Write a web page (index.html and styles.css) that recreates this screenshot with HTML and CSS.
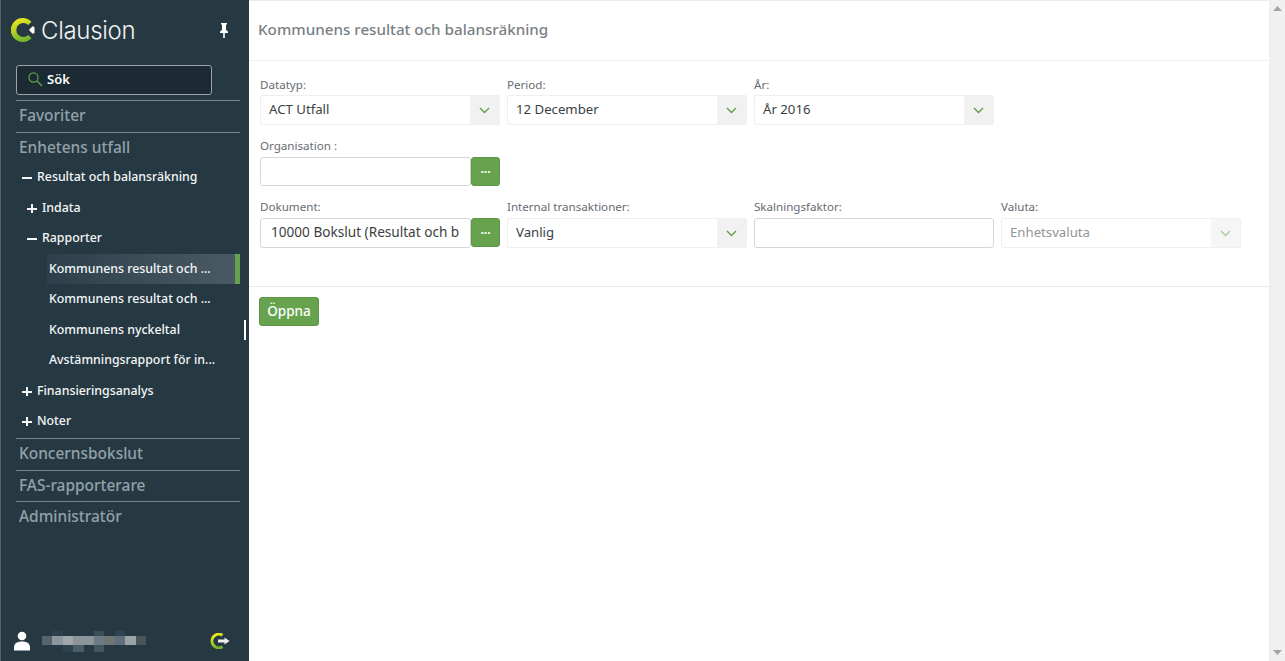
FILE: index.html
```html
<!DOCTYPE html>
<html lang="sv">
<head>
<meta charset="utf-8">
<title>Clausion</title>
<link rel="stylesheet" href="styles.css">
</head>
<body>
<div class="app">
  <aside class="sidebar">
    <div class="brand">
      <svg class="logo" width="24" height="24" viewBox="0 0 24 24" aria-hidden="true">
        <defs><linearGradient id="lg" x1="0.2" y1="0" x2="0.5" y2="1"><stop offset="0" stop-color="#f2ea1c"/><stop offset="1" stop-color="#74b52e"/></linearGradient></defs>
        <path d="M20.500 3.800A12 12 0 1 0 20.500 20.200L17.300 16.900A7 7 0 1 1 17.300 7.100Z" fill="url(#lg)"/>
        <path d="M18 12L21.500 8.200L23.500 9V15L21.500 15.800Z" fill="#fff"/>
      </svg>
      <span class="brand-name">Clausion</span>
      <svg class="pin" width="12" height="15" viewBox="0 0 12 15" aria-hidden="true"><path d="M3 0h6v1.500H8V7l2 1.500V10H2V8.500L4 7V1.500H3zM5.200 10h1.600v5H5.200z" fill="#fff"/></svg>
    </div>
    <div class="search">
      <svg width="16" height="16" viewBox="0 0 16 16" aria-hidden="true"><circle cx="6.500" cy="6.500" r="4.600" fill="none" stroke="#5fa04a" stroke-width="1.200"/><path d="M10 10l5 5" stroke="#5fa04a" stroke-width="1.400"/></svg>
      <span>Sök</span>
    </div>
    <nav class="nav">
      <div class="sec">Favoriter</div>
      <div class="sec">Enhetens utfall</div>
      <div class="item l1 first"><span class="sign minus"></span>Resultat och balansräkning</div>
      <div class="item l2"><span class="sign plus"></span>Indata</div>
      <div class="item l2"><span class="sign minus"></span>Rapporter</div>
      <div class="item leaf active">Kommunens resultat och ...</div>
      <div class="item leaf">Kommunens resultat och ...</div>
      <div class="item leaf">Kommunens nyckeltal<i class="thumb"></i></div>
      <div class="item leaf">Avstämningsrapport för in...</div>
      <div class="item l1"><span class="sign plus"></span>Finansieringsanalys</div>
      <div class="item l1"><span class="sign plus"></span>Noter</div>
      <div class="sec rule">Koncernsbokslut</div>
      <div class="sec">FAS-rapporterare</div>
      <div class="sec">Administratör</div>
    </nav>
    <div class="user">
      <svg width="18" height="20" viewBox="0 0 18 20" aria-hidden="true"><circle cx="9" cy="5" r="4.300" fill="#fff"/><path d="M1 19.500v-3c0-4 3-6 8-6s8 2 8 6v3z" fill="#fff"/></svg>
      <div class="blur" aria-hidden="true"><i></i><i></i><i></i><i></i><i></i><i></i><i></i><i></i><i></i><i></i></div>
      <svg class="logout" width="21" height="16" viewBox="0 0 21 16" aria-hidden="true"><path d="M13.500 2.300A6.800 6.800 0 1 0 13.500 13.700" fill="none" stroke="url(#lg)" stroke-width="3"/><path d="M9 6.500h6.500V4.500L20.500 8l-5 3.500v-2H9z" fill="#eee"/></svg>
    </div>
  </aside>
  <main class="main">
    <h1 class="title">Kommunens resultat och balansräkning</h1>
    <section class="form">
      <div class="row">
        <div class="field"><label>Datatyp:</label><div class="select"><span>ACT Utfall</span><b class="caret"><svg width="11" height="7" viewBox="0 0 11 7"><path d="M1 1l4.500 4.500L10 1" fill="none" stroke="#5fa04a" stroke-width="1.400"/></svg></b></div></div>
        <div class="field"><label>Period:</label><div class="select"><span>12 December</span><b class="caret"><svg width="11" height="7" viewBox="0 0 11 7"><path d="M1 1l4.500 4.500L10 1" fill="none" stroke="#5fa04a" stroke-width="1.400"/></svg></b></div></div>
        <div class="field"><label>År:</label><div class="select"><span>År 2016</span><b class="caret"><svg width="11" height="7" viewBox="0 0 11 7"><path d="M1 1l4.500 4.500L10 1" fill="none" stroke="#5fa04a" stroke-width="1.400"/></svg></b></div></div>
      </div>
      <div class="row">
        <div class="field"><label>Organisation :</label><div class="lookup short"><div class="input"></div><button class="dots">···</button></div></div>
      </div>
      <div class="row">
        <div class="field"><label>Dokument:</label><div class="lookup"><div class="input doc">10000 Bokslut (Resultat och b</div><button class="dots">···</button></div></div>
        <div class="field"><label>Internal transaktioner:</label><div class="select"><span>Vanlig</span><b class="caret plain"><svg width="11" height="7" viewBox="0 0 11 7"><path d="M1 1l4.500 4.500L10 1" fill="none" stroke="#5fa04a" stroke-width="1.400"/></svg></b></div></div>
        <div class="field"><label>Skalningsfaktor:</label><div class="input full"></div></div>
        <div class="field"><label>Valuta:</label><div class="select disabled"><span>Enhetsvaluta</span><b class="caret"><svg width="11" height="7" viewBox="0 0 11 7"><path d="M1 1l4.500 4.500L10 1" fill="none" stroke="#5fa04a" stroke-width="1.400"/></svg></b></div></div>
      </div>
    </section>
    <div class="actions"><button class="open">Öppna</button></div>
  </main>
  <div class="scrollbar">
    <svg width="9" height="5" viewBox="0 0 9 5" aria-hidden="true"><path d="M4.500 0L9 5H0z" fill="#a3a3a3"/></svg>
    <svg width="9" height="5" viewBox="0 0 9 5" aria-hidden="true"><path d="M0 0H9L4.500 5z" fill="#a3a3a3"/></svg>
  </div>
</div>
</body>
</html>
```
FILE: styles.css
```css
* { box-sizing: border-box; }
html, body { margin: 0; height: 100%; overflow: hidden; }
body { font-family: "Noto Sans", "Open Sans", sans-serif; font-size: 13px; color: #3a3f44; background: #fff; }
.app { display: flex; height: 661px; }

.sidebar { width: 249px; flex: none; background: #263943; border-left: 1px solid #55606a; display: flex; flex-direction: column; color: #fff; }
.brand { height: 65px; display: flex; align-items: center; padding: 0 19px 5px 10px; }
.logo { flex: none; }
.brand-name { font-family: Inter, sans-serif; font-weight: 300; font-size: 24px; letter-spacing: -.3px; margin-left: 6px; color: #f2f2f2; flex: 1; }
.search { margin: 0 0 0 15px; width: 196px; height: 30px; border: 1px solid #9aa2a6; border-radius: 3px; background: #1c2b33; display: flex; align-items: center; gap: 4px; padding: 0 0 3px 10px; font-size: 13px; font-weight: 600; }
.nav { margin: 5px 0 0 15px; width: 224px; flex: 1; }
.sec { height: 31.700px; line-height: 29px; border-top: 1px solid #7c858a; padding-left: 3px; font-size: 15.450px; font-weight: 500; color: #93a1a9; }
.sec.rule { margin-top: 1.100px; }
.item { position: relative; height: 30.500px; line-height: 29px; font-size: 12.350px; font-weight: 500; color: #f4f6f7; white-space: nowrap; }
.first { margin-top: -1.100px; }
.sign { display: inline-block; width: 15px; height: 10px; vertical-align: -1px; background-repeat: no-repeat; }
.minus { background-image: linear-gradient(#f4f6f7, #f4f6f7); background-size: 10px 2px; background-position: 0 5px; }
.plus { background-image: linear-gradient(#f4f6f7, #f4f6f7), linear-gradient(#f4f6f7, #f4f6f7); background-size: 10px 2px, 2px 10px; background-position: 0 5px, 4px 1px; }
.l1 { padding-left: 6px; }
.l2 { padding-left: 11px; }
.leaf { padding-left: 33px; }
.active { margin-left: 31px; padding-left: 2px; background: linear-gradient(90deg, #2c3f4a, #4a5a64); border-right: 5px solid #67a34f; }
.thumb { position: absolute; right: -6px; top: 5px; width: 2px; height: 20px; background: #fff; }
.user { height: 42px; display: flex; align-items: center; padding: 1px 19px 0 12px; gap: 11px; }
.blur { display: flex; height: 9px; flex: none; width: 104px; }
.blur i { flex: 1; background: #8c959b; }
.blur i:nth-child(1) { background: #54656f; }
.blur i:nth-child(2) { box-shadow: 0 -5px 0 #2d414c; }
.blur i:nth-child(3) { background: #a0a6aa; box-shadow: 0 7px 0 #2e424d; }
.blur i:nth-child(4) { box-shadow: 0 7px 0 #4b5d68; }
.blur i:nth-child(6) { background: #6c7a85; box-shadow: 0 -5px 0 #39505c, 0 7px 0 #43565f; }
.blur i:nth-child(7) { background: #6e7573; }
.blur i:nth-child(8) { background: #5f6f7b; box-shadow: 0 -5px 0 #2f444f; }
.blur i:nth-child(9) { background: #9ba3a5; }
.blur i:nth-child(10) { background: #48565a; }
.logout { margin-left: auto; }

.main { flex: 1; min-width: 0; border-top: 1px solid #eaeaea; }
.title { margin: 0; height: 60px; padding-left: 9px; line-height: 57px; font-size: 15.200px; font-weight: 500; color: #7a7f84; border-bottom: 1px solid #f1f1f1; }
.form { height: 226px; padding: 16px 0 0 11px; border-bottom: 1px solid #e9e9e9; }
.row { display: flex; gap: 7px; margin-bottom: 13px; }
.field { width: 240px; flex: none; }
.field label { display: block; font-size: 11.600px; line-height: 15px; color: #666c72; height: 18px; }
.row + .row label { height: 19px; }
.select { height: 30px; border: 1px solid #efefef; border-radius: 2px; display: flex; align-items: center; font-size: 13.200px; padding-left: 8px; }
.select span { flex: 1; padding-bottom: 2px; }
.caret { width: 29px; height: 100%; background: #f1f1f1; display: flex; align-items: center; justify-content: center; }
.caret.plain { background: #f1f1f1; }
.disabled { color: #909498; }
.disabled .caret { background: #f6f6f6; }
.disabled .caret svg { opacity: .5; }
.lookup { display: flex; height: 30px; }
.lookup.short { height: 29px; }
.input { height: 100%; border: 1px solid #d6d6d6; border-radius: 3px; font-size: 13.600px; line-height: 26px; padding-left: 10px; white-space: nowrap; overflow: hidden; }
.lookup .input { width: 211px; }
.input.full { width: 240px; height: 30px; }
.dots { width: 29px; height: 29px; border: 1px solid #5d9646; border-radius: 3px; background: #67a34f; color: #fff; font-weight: 700; font-size: 12px; line-height: 1; padding: 0; font-family: inherit; }
.actions { padding: 10px 0 0 10px; }
.open { width: 60px; height: 29px; border: 1px solid #5d9646; border-radius: 3px; background: #67a34f; color: #fff; font-size: 13.500px; font-weight: 500; padding: 0 0 1px; font-family: inherit; }
.scrollbar { width: 16px; flex: none; background: #f0f0f0; display: flex; flex-direction: column; justify-content: space-between; align-items: center; padding: 6px 0; }
.scrollbar svg { display: block; }
```
